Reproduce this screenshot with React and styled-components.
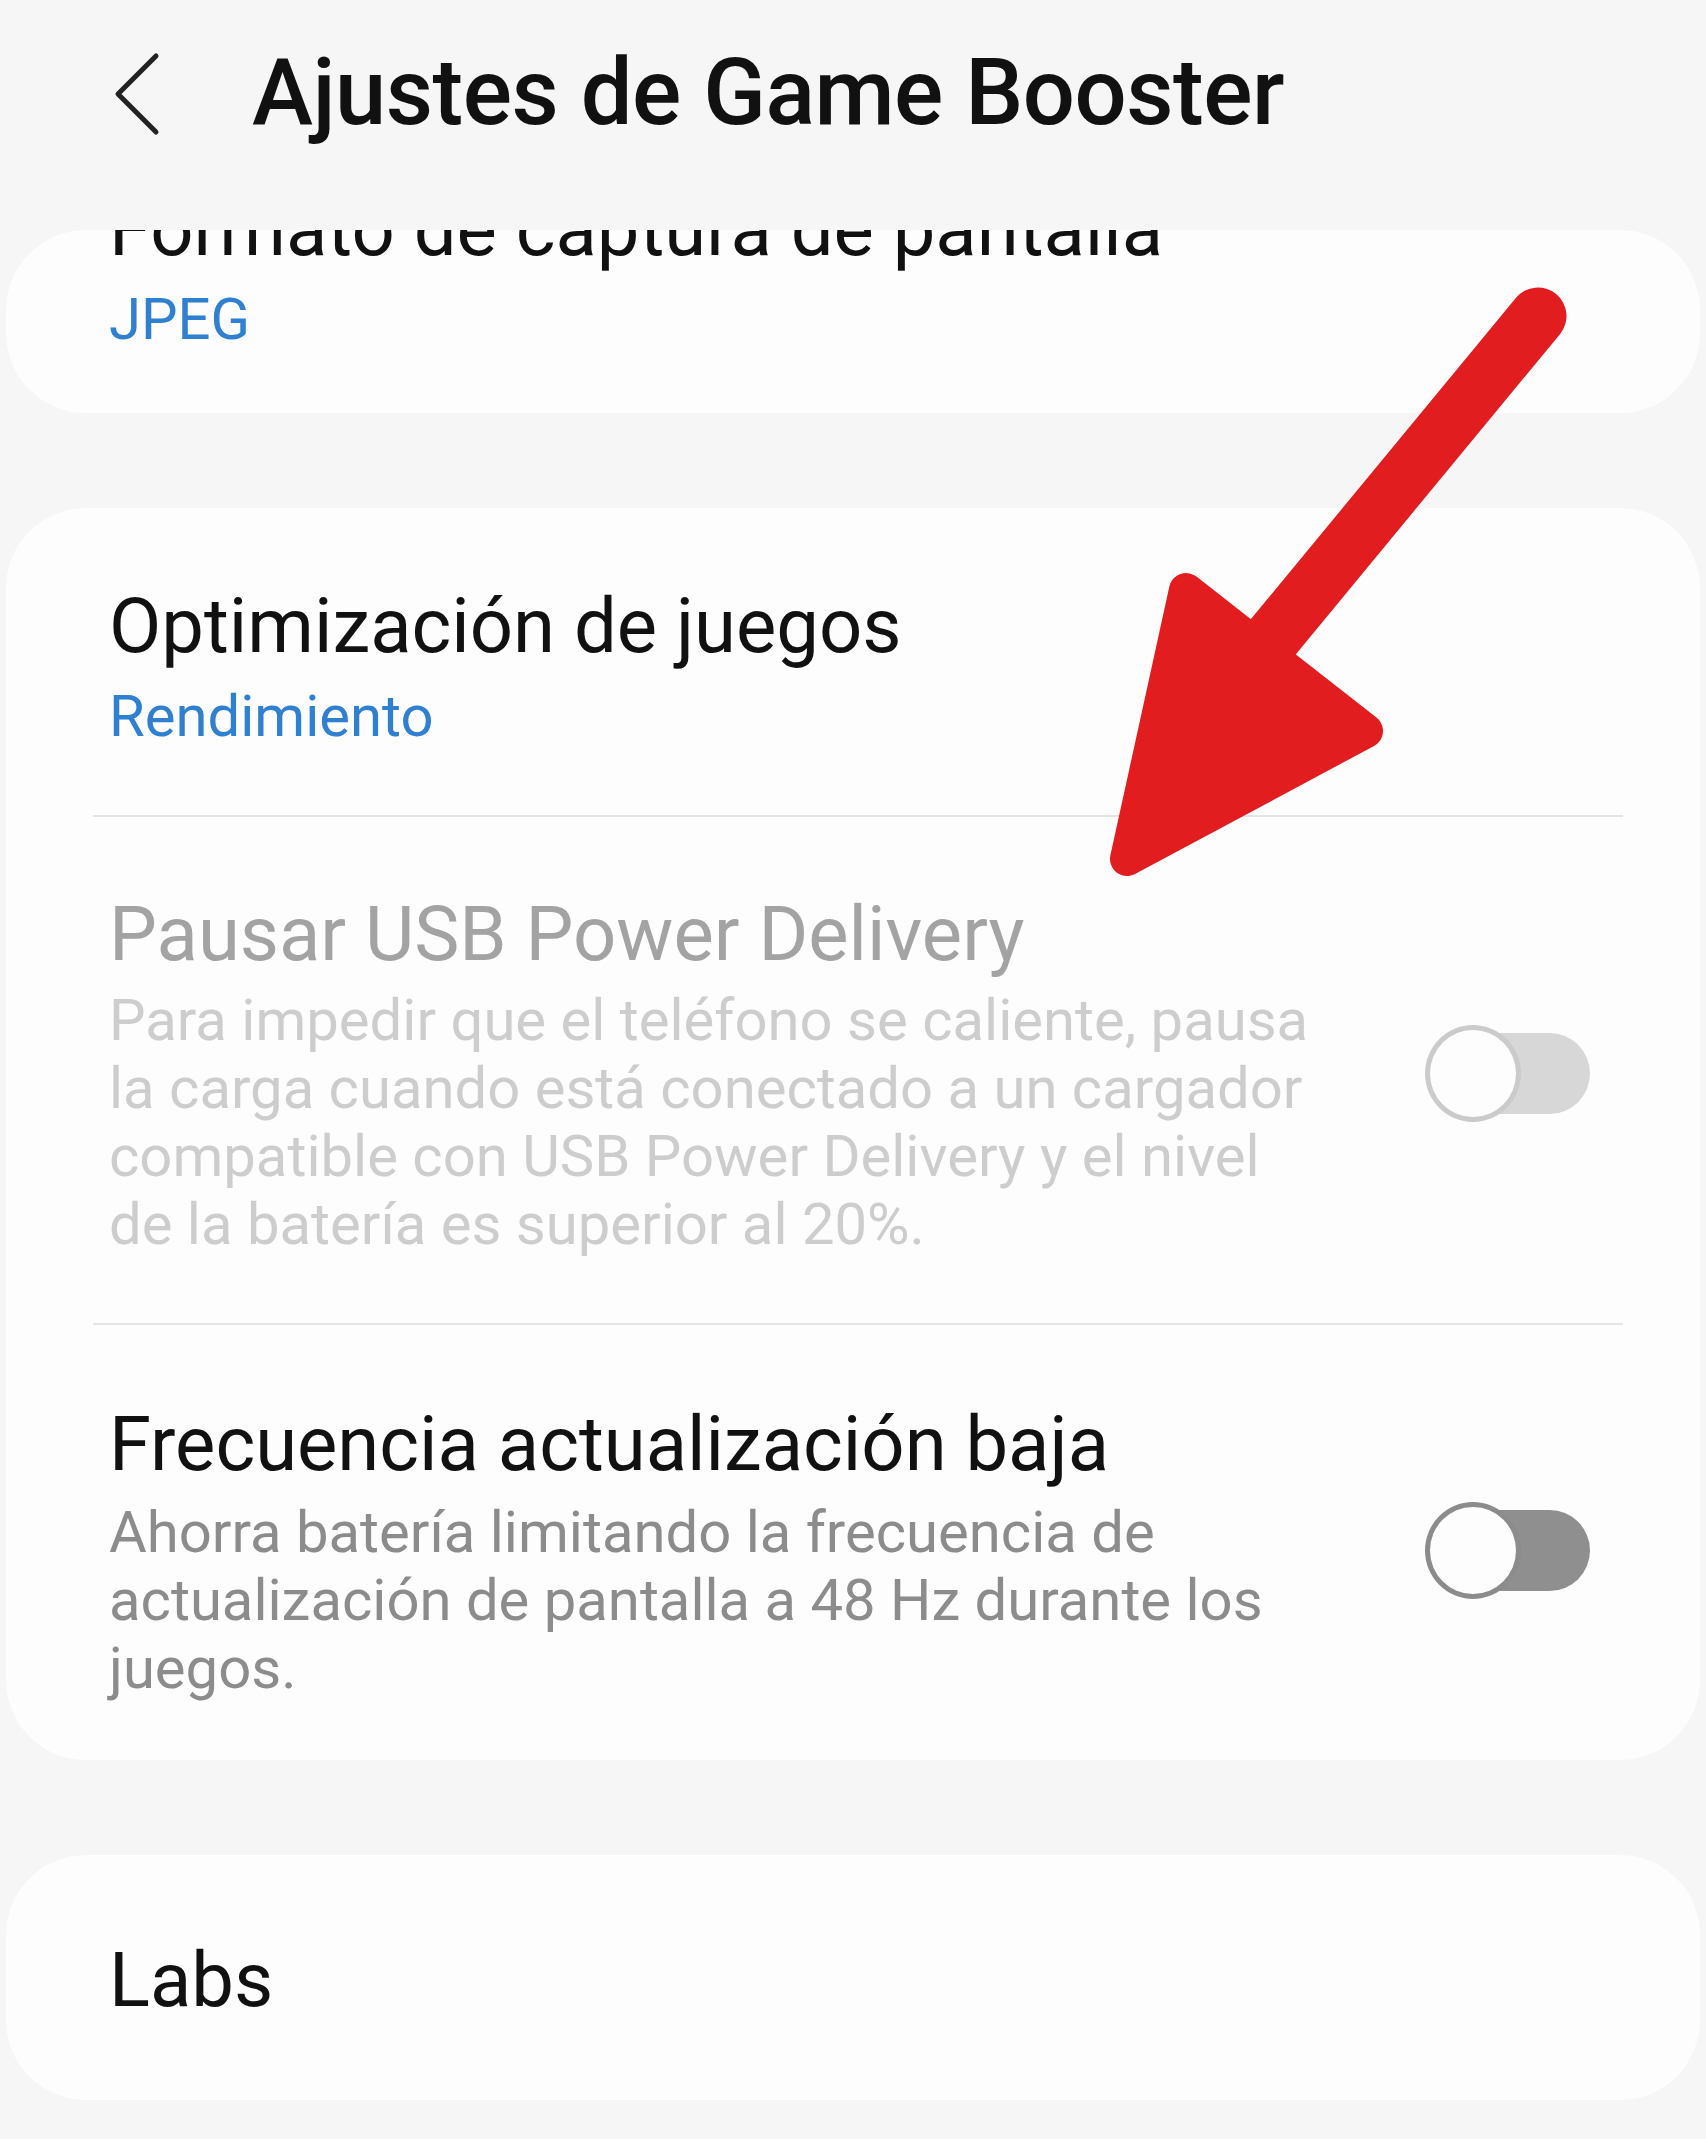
import React from 'react'
import styled, { createGlobalStyle } from 'styled-components'

const colors = {
  page: '#f6f6f6',
  card: '#fdfdfd',
  text: '#111111',
  blue: '#2f80d1',
  summary: '#8c8c8c',
  disabledTitle: '#a3a3a3',
  disabledSummary: '#cdcdcd',
  divider: '#e4e4e4',
  arrow: '#e11d1f',
}

const GlobalStyle = createGlobalStyle`
  html, body {
    margin: 0;
    padding: 0;
    background: ${colors.page};
  }
  body {
    font-family: Roboto, "Noto Sans", "Liberation Sans", sans-serif;
    -webkit-font-smoothing: antialiased;
  }
`

const Screen = styled.div`
  position: relative;
  width: 1706px;
  height: 2139px;
  overflow: hidden;
  background: ${colors.page};
  display: flex;
  flex-direction: column;
`

const Header = styled.header`
  flex: 0 0 230px;
  box-sizing: border-box;
  display: flex;
  align-items: flex-start;
  padding: 38px 0 0 112px;
`

const BackButton = styled.div`
  display: flex;
  align-items: center;
  height: 110px;
  margin-right: 90px;
`

const Title = styled.h1`
  margin: 0;
  font-size: 92px;
  line-height: 110px;
  font-weight: 500;
  color: ${colors.text};
  letter-spacing: -0.5px;
`

const Viewport = styled.main`
  flex: 1;
  margin: 0 6px;
  border-radius: 80px 80px 0 0;
  overflow: hidden;
  display: flex;
  flex-direction: column;
  gap: 95px;
`

const Card = styled.section`
  background: ${colors.card};
  border-radius: 80px;
  margin-top: ${props => props.offset || 0}px;
  flex-shrink: 0;
`

const Row = styled.div`
  display: flex;
  align-items: center;
  justify-content: space-between;
  padding: ${props => props.pad || '73px 110px 65px 103px'};
`

const TextCol = styled.div`
  flex: 0 1 1214px;
  min-width: 0;
`

const RowTitle = styled.div`
  font-size: 76px;
  line-height: 91px;
  white-space: nowrap;
  color: ${props => (props.disabled ? colors.disabledTitle : colors.text)};
`

const Summary = styled.div`
  margin-top: ${props => props.gap || 10}px;
  font-size: 58px;
  line-height: 68px;
  color: ${props =>
    props.blue ? colors.blue : props.disabled ? colors.disabledSummary : colors.summary};
`

const Divider = styled.hr`
  margin: 0 77px 0 87px;
  border: 0;
  height: 2px;
  background: ${colors.divider};
`

const SwitchBox = styled.div`
  position: relative;
  flex: 0 0 165px;
  height: 97px;
`

const Track = styled.div`
  position: absolute;
  left: 8px;
  top: 8px;
  width: 157px;
  height: 81px;
  border-radius: 41px;
  background: ${props => (props.disabled ? '#d7d7d7' : '#8f8f8f')};
`

const Thumb = styled.div`
  position: absolute;
  left: 0;
  top: 0;
  box-sizing: border-box;
  width: 96px;
  height: 97px;
  border-radius: 50%;
  background: #fdfdfd;
  border: 5px solid ${props => (props.disabled ? '#cbcbcb' : '#8c8c8c')};
`

const Annotation = styled.svg`
  position: absolute;
  left: 0;
  top: 0;
  pointer-events: none;
`

function Switch({ disabled }) {
  return (
    <SwitchBox>
      <Track disabled={disabled} />
      <Thumb disabled={disabled} />
    </SwitchBox>
  )
}

export default function App() {
  return (
    <Screen>
      <GlobalStyle />
      <Header>
        <BackButton>
          <svg width="50" height="86" viewBox="0 0 50 86">
            <path d="M44 6 L6 44 L44 82" fill="none" stroke="#222" strokeWidth="5" strokeLinecap="round" strokeLinejoin="round" />
          </svg>
        </BackButton>
        <Title>Ajustes de Game Booster</Title>
      </Header>

      <Viewport>
        <Card offset={-119}>
          <Row pad="73px 110px 60px 103px">
            <TextCol>
              <RowTitle>Formato de captura de pantalla</RowTitle>
              <Summary blue>JPEG</Summary>
            </TextCol>
          </Row>
        </Card>

        <Card>
          <Row>
            <TextCol>
              <RowTitle>Optimización de juegos</RowTitle>
              <Summary blue>Rendimiento</Summary>
            </TextCol>
          </Row>
          <Divider />
          <Row pad="72px 110px 65px 103px">
            <TextCol>
              <RowTitle disabled>Pausar USB Power Delivery</RowTitle>
              <Summary disabled gap={6}>
                Para impedir que el teléfono se caliente, pausa la carga cuando está conectado a un
                cargador compatible con USB Power Delivery y el nivel de la batería es superior al 20%.
              </Summary>
            </TextCol>
            <Switch disabled />
          </Row>
          <Divider />
          <Row pad="74px 110px 58px 103px">
            <TextCol>
              <RowTitle>Frecuencia actualización baja</RowTitle>
              <Summary gap={8}>
                Ahorra batería limitando la frecuencia de actualización de pantalla a 48 Hz durante los
                juegos.
              </Summary>
            </TextCol>
            <Switch />
          </Row>
        </Card>

        <Card>
          <Row pad="80px 110px 74px 103px">
            <TextCol>
              <RowTitle>Labs</RowTitle>
            </TextCol>
          </Row>
        </Card>
      </Viewport>

      <Annotation width="1706" height="2139" viewBox="0 0 1706 2139">
        <line x1="1538" y1="316" x2="1250" y2="665" stroke={colors.arrow} strokeWidth="57" strokeLinecap="round" />
        <polygon
          points="1186,590 1366,731 1127,859"
          fill={colors.arrow}
          stroke={colors.arrow}
          strokeWidth="34"
          strokeLinejoin="round"
        />
      </Annotation>
    </Screen>
  )
}
